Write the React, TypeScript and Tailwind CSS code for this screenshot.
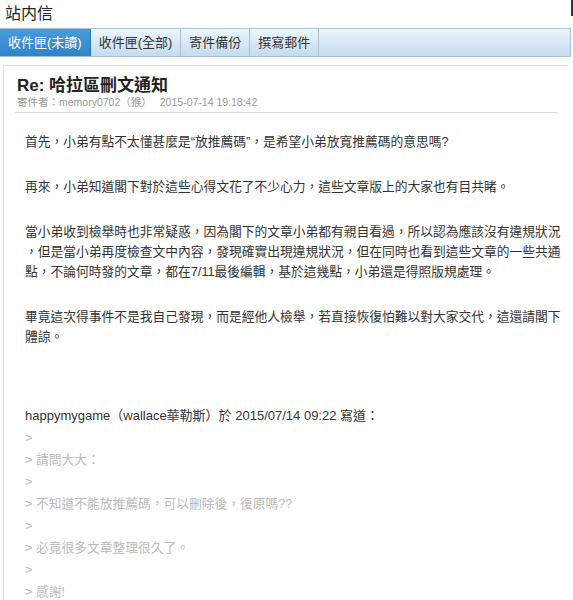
const font = "font-['Liberation_Sans','Noto_Sans_CJK_TC',sans-serif]";

const tabs = ["收件匣(未讀)", "收件匣(全部)", "寄件備份", "撰寫郵件"];

const paragraphs: string[][] = [
  ["首先，小弟有點不太懂甚麼是“放推薦碼”，是希望小弟放寬推薦碼的意思嗎?"],
  ["再來，小弟知道閣下對於這些心得文花了不少心力，這些文章版上的大家也有目共睹。"],
  [
    "當小弟收到檢舉時也非常疑惑，因為閣下的文章小弟都有親自看過，所以認為應該沒有違規狀況",
    "，但是當小弟再度檢查文中內容，發現確實出現違規狀況，但在同時也看到這些文章的一些共通",
    "點，不論何時發的文章，都在7/11最後編輯，基於這幾點，小弟還是得照版規處理。",
  ],
  [
    "畢竟這次得事件不是我自己發現，而是經他人檢舉，若直接恢復怕難以對大家交代，這還請閣下",
    "體諒。",
  ],
];

const quote = [
  ">",
  "> 請問大大：",
  ">",
  "> 不知道不能放推薦碼，可以刪除後，復原嗎??",
  ">",
  "> 必竟很多文章整理很久了。",
  ">",
  "> 感謝!",
];

export default function App() {
  return (
    <div className={`relative w-[573px] h-[600px] overflow-hidden bg-white ${font}`}>
      {/* window edge at the top right */}
      <div className="absolute right-0 top-0 w-[2px] h-[16px] bg-[#333]" />

      <div className="h-[28px] pl-[5px] pt-[3px] text-[16px] leading-[22px] text-[#222]">
        站内信
      </div>

      <div className="flex h-[29px] mr-[2px] border-y border-r border-[#a7c0d3] bg-gradient-to-b from-[#edf5fb] to-[#c3dcf0]">
        {tabs.map((t, i) => (
          <div
            key={t}
            className={
              i === 0
                ? "flex items-center px-[8px] text-[13px] text-white bg-gradient-to-b from-[#4a9bd9] to-[#2f83c8] border-r border-[#2a77b5]"
                : "flex items-center px-[8px] text-[13px] text-[#333] border-r border-[#a7c0d3]"
            }
          >
            {t}
          </div>
        ))}
      </div>

      <div className="mt-[8px] ml-[3px] mr-[5px] border-l border-t border-[#dcdcdc] h-[600px]">
        <div className="mx-[11px] pt-[10px] pb-[3px] border-b border-[#dddddd]">
          <div className="pl-[2px] text-[17px] leading-[20px] font-bold text-[#222]">
            Re: 哈拉區刪文通知
          </div>
          <div className="pl-[2px] text-[10.5px] leading-[13px] text-[#999]">
            寄件者：memory0702（猴）<span className="ml-[8px]">2015-07-14 19:18:42</span>
          </div>
        </div>

        <div className="pl-[21px] pt-[19px] text-[12.75px] leading-[20px] text-[#333]">
          {paragraphs.map((p, i) => (
            <div key={i} className="mb-[25px]">
              {p.map((line) => (
                <div key={line} className="whitespace-nowrap">
                  {line}
                </div>
              ))}
            </div>
          ))}

          <div className="pt-[33px] leading-[22px]">
            <div className="text-[13px] text-[#333] whitespace-nowrap">
              happymygame（wallace華勒斯）於 2015/07/14 09:22 寫道：
            </div>
            {quote.map((q, i) => (
              <div key={i} className="text-[#bbbbbb] whitespace-nowrap">
                {q}
              </div>
            ))}
          </div>
        </div>
      </div>
    </div>
  );
}
